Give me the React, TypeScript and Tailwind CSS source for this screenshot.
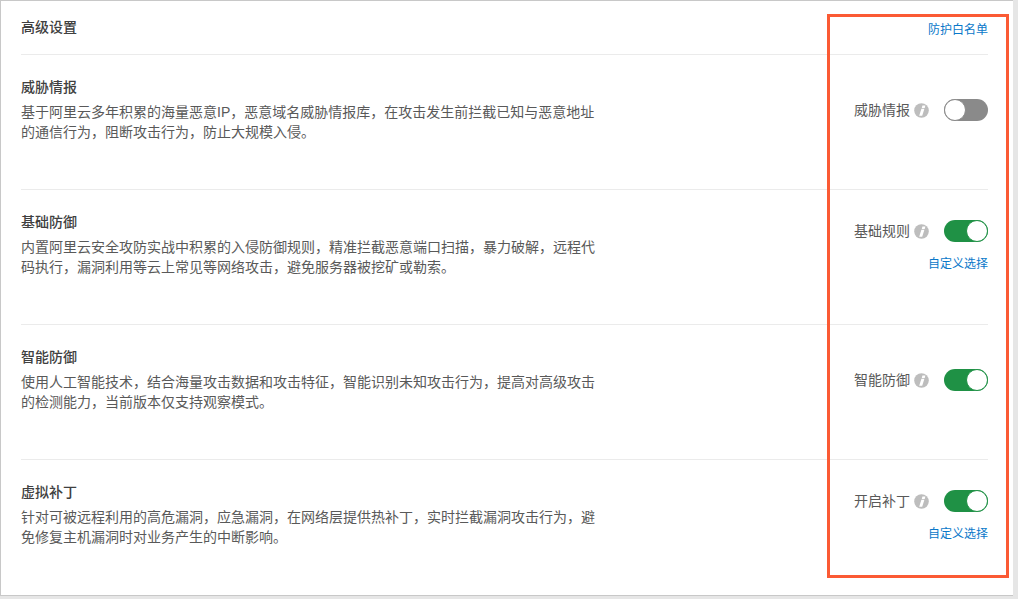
const font = { fontFamily: '"Liberation Sans", "Noto Sans CJK SC", sans-serif' };

function Info() {
  return (
    <svg width="15" height="15" viewBox="0 0 15 15" className="shrink-0">
      <circle cx="7.5" cy="7.5" r="7.3" fill="#bdbdbd" />
      <path d="M8.4 2.4h3L10.7 5H7.8zM7.4 5.8h3L8.2 12.8H5.2z" fill="#ffffff" />
    </svg>
  );
}

function Toggle({ on }: { on: boolean }) {
  return (
    <div className={`flex h-[22px] w-[44px] items-center rounded-full ${on ? "justify-end bg-[#1f9145]" : "justify-start bg-[#8a8a8a]"}`}>
      <div className={`h-[22px] w-[22px] rounded-full border border-solid bg-white ${on ? "border-[#1f9145]" : "border-[#8a8a8a]"}`} />
    </div>
  );
}

const rows = [
  {
    title: "威胁情报",
    lines: ["基于阿里云多年积累的海量恶意IP，恶意域名威胁情报库，在攻击发生前拦截已知与恶意地址", "的通信行为，阻断攻击行为，防止大规模入侵。"],
    label: "威胁情报",
    on: false,
    link: false,
  },
  {
    title: "基础防御",
    lines: ["内置阿里云安全攻防实战中积累的入侵防御规则，精准拦截恶意端口扫描，暴力破解，远程代", "码执行，漏洞利用等云上常见等网络攻击，避免服务器被挖矿或勒索。"],
    label: "基础规则",
    on: true,
    link: true,
  },
  {
    title: "智能防御",
    lines: ["使用人工智能技术，结合海量攻击数据和攻击特征，智能识别未知攻击行为，提高对高级攻击", "的检测能力，当前版本仅支持观察模式。"],
    label: "智能防御",
    on: true,
    link: false,
  },
  {
    title: "虚拟补丁",
    lines: ["针对可被远程利用的高危漏洞，应急漏洞，在网络层提供热补丁，实时拦截漏洞攻击行为，避", "免修复主机漏洞时对业务产生的中断影响。"],
    label: "开启补丁",
    on: true,
    link: true,
  },
];

export default function App() {
  return (
    <div className="relative h-[599px] w-[1018px] overflow-hidden bg-[#e6e6e6]" style={font}>
      <div className="h-[596px] w-[1013px] border-t border-b border-l border-solid border-[#c8c8c8] bg-white pr-[25px] pl-[20px]">
        <div className="flex h-[54px] items-start justify-between border-b border-solid border-[#ebebeb]">
          <span className="mt-[16px] text-[14px] leading-[20px] font-medium text-[#404040]">高级设置</span>
          <a className="mt-[19px] text-[12px] leading-[20px] text-[#0a78c9]">防护白名单</a>
        </div>
        {rows.map((r, i) => (
          <div key={r.title} className={`flex h-[135px] justify-between ${i < 3 ? "border-b border-solid border-[#ebebeb]" : ""}`}>
            <div className="pt-[22px]">
              <div className="text-[14px] leading-[20px] font-medium text-[#404040]">{r.title}</div>
              <div className="mt-[5px] w-[600px] text-[14px] leading-[20px] whitespace-nowrap text-[#595959]">
                {r.lines.map((l) => (
                  <div key={l}>{l}</div>
                ))}
              </div>
            </div>
            <div className={`flex flex-col items-end ${r.link ? "pt-[26px]" : "pt-[40px]"}`}>
              <div className="flex h-[30px] items-center">
                <span className="text-[14px] text-[#595959]">{r.label}</span>
                <span className="mr-[15px] ml-[4px] flex"><Info /></span>
                <Toggle on={r.on} />
              </div>
              {r.link && <a className="mt-[8px] text-[12px] leading-[20px] text-[#0a78c9]">自定义选择</a>}
            </div>
          </div>
        ))}
      </div>
      <div className="absolute top-[14px] left-[827px] h-[564px] w-[182px] border-[3px] border-solid border-[#fb5a34]" />
    </div>
  );
}
